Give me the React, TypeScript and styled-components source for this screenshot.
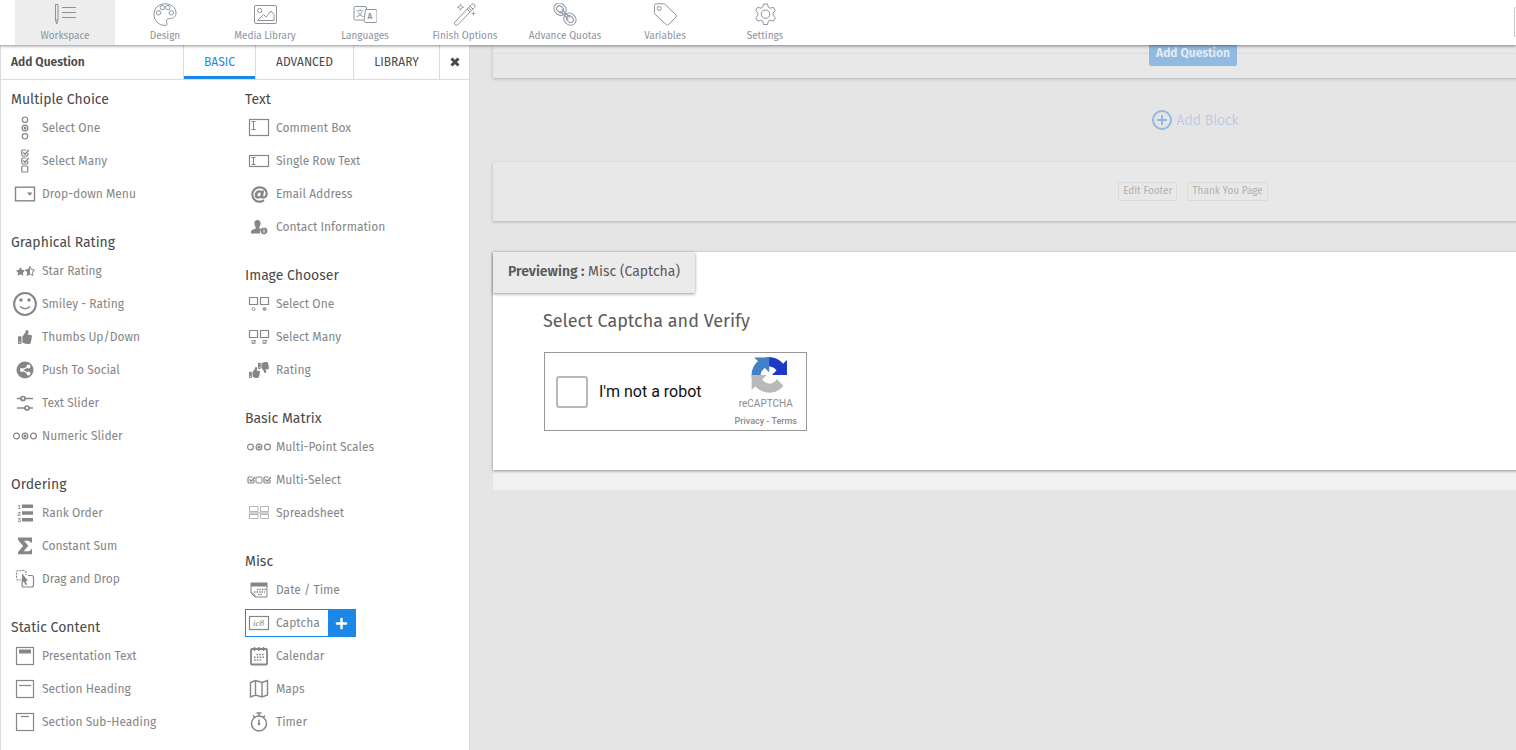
import React, { ReactNode, useState } from 'react';
import styled, { createGlobalStyle } from 'styled-components';
import { FaAt, FaStar, FaStarHalfAlt, FaThumbsDown, FaThumbsUp, FaPlus } from 'react-icons/fa';

const GlobalStyle = createGlobalStyle`
  * { box-sizing: border-box; }
  body {
    margin: 0;
    overflow: hidden;
    background: #e5e5e5;
    color: #4a4a4a;
    font-family: 'Fira Sans', 'Noto Sans', sans-serif;
  }
  button, input { font-family: inherit; }
`;

const Page = styled.div`
  display: flex;
  flex-direction: column;
  height: 100vh;
`;

const TopBar = styled.header`
  position: relative;
  z-index: 2;
  flex: none;
  display: flex;
  align-items: flex-start;
  height: 45px;
  padding-left: 15px;
  background: #fff;
  box-shadow: 0 1px 3px rgba(0, 0, 0, 0.45);
`;

const TopNav = styled.nav`
  display: flex;
  height: 100%;
  flex: 1;
`;

const TopButton = styled.button<{ $active?: boolean }>`
  display: flex;
  flex-direction: column;
  align-items: center;
  gap: 2px;
  width: 100px;
  padding: 3px 0 0;
  border: 0;
  background: ${(p) => (p.$active ? '#ededed' : 'transparent')};
  color: #8b93a1;
  font-size: 10px;
  line-height: 14px;
  white-space: nowrap;
`;

const SearchEdge = styled.div`
  width: 2px;
  height: 30px;
  margin-top: 7px;
  border: 1px solid #ccc;
  border-right: 0;
  border-radius: 2px 0 0 2px;
`;

const Body = styled.div`
  flex: 1;
  min-height: 0;
  display: flex;
`;

const Sidebar = styled.aside`
  flex: none;
  width: 470px;
  border: 1px solid #dcdcdc;
  border-width: 0 1px;
  background: #fff;
`;

const TabBar = styled.div`
  display: flex;
  height: 35px;
  border-bottom: 1px solid #dcdcdc;
`;

const SidebarTitle = styled.h2`
  flex: 1;
  margin: 0;
  padding-left: 10px;
  font-size: 12px;
  font-weight: 600;
  line-height: 34px;
`;

const Tab = styled.button<{ $active?: boolean; $width: number }>`
  display: flex;
  align-items: center;
  justify-content: center;
  width: ${(p) => p.$width}px;
  padding: 0;
  border: 0;
  border-left: 1px solid #dcdcdc;
  box-shadow: ${(p) => (p.$active ? 'inset 0 -3px #1b87e6' : 'none')};
  background: transparent;
  color: ${(p) => (p.$active ? '#1b87e6' : '#4a4a4a')};
  font-size: 12px;
  line-height: 20px;
`;

const Columns = styled.div`
  display: grid;
  grid-template-columns: 234px 1fr;
  padding: 9px 0 0 10px;
`;

const Column = styled.div`
  display: flex;
  flex-direction: column;
  gap: 24px;
`;

const Group = styled.section`
  display: flex;
  flex-direction: column;
  align-items: flex-start;
  gap: 5px;
`;

const GroupTitle = styled.h3`
  height: 20px;
  margin: 0;
  color: #4a4a4a;
  font-size: 14px;
  font-weight: 400;
  line-height: 22px;
`;

const Item = styled.button<{ $selected?: boolean }>`
  display: flex;
  align-items: center;
  height: 28px;
  padding: 0 ${(p) => (p.$selected ? 0 : 8)}px 0 0;
  border: 1px solid ${(p) => (p.$selected ? '#1b87e6' : 'transparent')};
  background: transparent;
  color: #868686;
  font-size: 12px;
  line-height: 16px;
  white-space: nowrap;
`;

const IconCell = styled.span`
  display: flex;
  justify-content: center;
  align-items: center;
  width: 26px;
  height: 26px;
  margin-right: 4px;
`;

const PlusCell = styled.span`
  display: flex;
  justify-content: center;
  align-items: center;
  width: 27px;
  height: 26px;
  margin-left: 8px;
  background: #1b87e6;
  color: #fff;
`;

const Canvas = styled.main`
  flex: 1;
  min-width: 0;
  overflow: hidden;
  padding-left: 23px;
`;

const Survey = styled.div`
  display: flex;
  flex-direction: column;
  min-width: 1400px;
`;

const Block = styled.section`
  display: flex;
  flex-direction: column;
  height: 33px;
  background: #e8e8e8;
  box-shadow: 0 1px 3px rgba(0, 0, 0, 0.22);
`;

const Divider = styled.div`
  display: flex;
  align-items: center;
  margin-top: -5px;
  &::before, &::after {
    content: '';
    flex: 1;
    height: 1px;
    background: #dcdcdc;
  }
`;

const AddQuestion = styled.button`
  width: 88px;
  height: 26px;
  padding: 0;
  border: 0;
  border-radius: 2px;
  background: #90bae0;
  color: #e8edf2;
  font-size: 12px;
  font-weight: 600;
`;

const AddBlock = styled.button`
  display: flex;
  align-items: center;
  justify-content: center;
  gap: 5px;
  width: 100%;
  height: 84px;
  padding: 0 0 0 4px;
  border: 0;
  background: transparent;
  color: #aec3e6;
  font-size: 14px;
  font-weight: 300;
`;

const FooterBlock = styled.section`
  display: flex;
  align-items: center;
  justify-content: center;
  gap: 10px;
  height: 59px;
  background: #e8e8e8;
  box-shadow: 0 1px 3px rgba(0, 0, 0, 0.22);
`;

const SmallButton = styled.button`
  height: 19px;
  padding: 0 4px;
  border: 1px solid #dbdbdb;
  border-radius: 1px;
  background: transparent;
  color: #b0b0b0;
  font-size: 10px;
  line-height: 17px;
`;

const PreviewArea = styled.div`
  margin-top: 31px;
  padding-bottom: 20px;
  background: #f1f1f1;
`;

const Preview = styled.section`
  height: 218px;
  background: #fff;
  box-shadow: 0 1px 3px rgba(0, 0, 0, 0.4);
`;

const PreviewTag = styled.div`
  width: fit-content;
  height: 41px;
  padding: 0 15px;
  background: #ebebeb;
  box-shadow: 0 1px 3px rgba(0, 0, 0, 0.4);
  color: #5a5a5a;
  font-size: 14px;
  line-height: 40px;
  b { font-weight: 600; }
`;

const PreviewTitle = styled.h1`
  margin: 15px 0 18px 50px;
  color: #5c5c5c;
  font-size: 18px;
  font-weight: 400;
  line-height: 26px;
`;

const Captcha = styled.div`
  display: flex;
  align-items: center;
  justify-content: space-between;
  width: 263px;
  height: 79px;
  margin-left: 51px;
  padding: 0 9px 0 11px;
  border: 1px solid #999;
  font-family: Roboto, sans-serif;
`;

const CaptchaLabel = styled.label`
  display: flex;
  align-items: center;
  gap: 11px;
  color: #111;
  font-size: 16px;
  line-height: 20px;
`;

const CheckInput = styled.input`
  appearance: none;
  width: 32px;
  height: 32px;
  margin: 0;
  border: 2px solid #b8b8b4;
  border-radius: 3px;
  background: #fff;
`;

const Brand = styled.div`
  display: flex;
  flex-direction: column;
  align-items: center;
  color: #8b8b8b;
  font-size: 10px;
  line-height: 22px;
`;

const Legal = styled.span`
  font-size: 9px;
  font-weight: 500;
  line-height: 12px;
`;

const Drawing = ({ children, w = 24, h = 24, sw = 1.2 }: { children: ReactNode; w?: number; h?: number; sw?: number }) => (
  <svg width={w} height={h} viewBox={`0 0 ${w} ${h}`} fill="none" stroke="currentColor" strokeWidth={sw} aria-hidden="true">
    {children}
  </svg>
);

const Solid = ({ children }: { children: ReactNode }) => <g fill="currentColor" stroke="none">{children}</g>;

const CheckedBox = ({ x, y, s = 6 }: { x: number; y: number; s?: number }) => (
  <>
    <path d={`M${x + s} ${y + s / 2}v${s / 2 - 1}q0 1-1 1H${x + 1}q-1 0-1-1V${y + 1}q0-1 1-1H${x + s - 1.5}`} />
    <path d={`M${x + s * 0.25} ${y + s * 0.4}l${s * 0.3} ${s * 0.3}L${x + s + 1} ${y}`} strokeWidth={1.4} />
  </>
);

const RadioRow = () => (
  <Drawing>
    <circle cx="3.5" cy="12" r="2.9" /><circle cx="12" cy="12" r="2.9" /><circle cx="20.5" cy="12" r="2.9" />
    <Solid><circle cx="12" cy="12" r="1.5" /></Solid>
  </Drawing>
);

const PageFrame = ({ children }: { children: ReactNode }) => (
  <Drawing>
    <rect x="3.5" y="3.5" width="17" height="17" />
    {children}
  </Drawing>
);

const icons: Record<string, ReactNode> = {
  radios: (
    <Drawing>
      <circle cx="12" cy="3.7" r="2.7" /><circle cx="12" cy="12" r="2.9" /><circle cx="12" cy="20.3" r="2.7" />
      <Solid><circle cx="12" cy="12" r="1.5" /></Solid>
    </Drawing>
  ),
  checks: (
    <Drawing>
      <CheckedBox x={8.8} y={1} /><CheckedBox x={8.8} y={9} />
      <rect x="8.8" y="17" width="6" height="6" rx="1" />
    </Drawing>
  ),
  dropdown: (
    <Drawing sw={1.4}>
      <rect x="2.5" y="5.2" width="19" height="13.6" />
      <Solid><path d="M14 10.500h5.500L16.750 13.800z" /></Solid>
    </Drawing>
  ),
  stars: <><FaStar size={9} /><FaStarHalfAlt size={10} /></>,
  smiley: (
    <Drawing sw={2}>
      <circle cx="12" cy="12" r="10.900" />
      <path d="M7 14.500q5 4.500 10 0" strokeWidth="1.600" />
      <Solid><circle cx="8" cy="8" r="1.700" /><circle cx="16" cy="8" r="1.700" /></Solid>
    </Drawing>
  ),
  thumb: <FaThumbsUp size={14} />,
  share: (
    <Drawing>
      <Solid><circle cx="12" cy="12" r="8.500" /></Solid>
      <g stroke="#fff" strokeWidth="1.300"><path d="M15.500 8.500L9 12l6.500 3.500" /></g>
      <g fill="#fff" stroke="none"><circle cx="15.500" cy="8.500" r="1.900" /><circle cx="8.800" cy="12" r="1.900" /><circle cx="15.500" cy="15.500" r="1.900" /></g>
    </Drawing>
  ),
  sliders: (
    <Drawing sw={1.7}>
      <path d="M4 7.500h4M12 7.500h8M4 17h8M16 17h4" /><circle cx="10" cy="7.500" r="2" /><circle cx="14" cy="17" r="2" />
    </Drawing>
  ),
  radioRow: <RadioRow />,
  rank: (
    <Drawing>
      <Solid>
        <path d="M9 3.500h11v3.500H9zM9 10.300h11v3.500H9zM9 17h11v3.500H9z" />
        <g fontSize="6" fontWeight="700" fontFamily="Liberation Sans"><text x="4.500" y="7.500">1</text><text x="4.500" y="14.500">2</text><text x="4.500" y="21">3</text></g>
      </Solid>
    </Drawing>
  ),
  sigma: (
    <Drawing><Solid><path d="M5 3.500h14v5h-1.500q-.5-1.700-2.500-1.700h-4l4.300 5-4.600 5.400h4.800q2 0 2.500-1.900H19v5H5v-2.300l5.200-6.100L5 6z" /></Solid></Drawing>
  ),
  drag: (
    <Drawing>
      <path d="M8.500 13H5.500q-2 0-2-2V5.500q0-2 2-2H11q2 0 2 2V8" strokeDasharray="2 1" />
      <path d="M15 8.500h3.500q2 0 2 2v7.500q0 2-2 2H11q-2 0-2-2v-3" />
      <Solid><path d="M9 6.500l6 7.200-2.400.2 1.500 3.500-1.700.7-1.500-3.500L9 16z" /></Solid>
    </Drawing>
  ),
  presentation: <PageFrame><Solid><path d="M6 5.500h12v4H6z" /></Solid></PageFrame>,
  heading: <PageFrame><path d="M6 8.500h12" /></PageFrame>,
  subheading: <PageFrame><path d="M8 6.500h8" /></PageFrame>,
  comment: (
    <Drawing><rect x="2.500" y="3.500" width="19" height="16" /><path d="M4.500 5.500h4M6.500 5.500v8M4.500 13.500h4" strokeWidth="1" /></Drawing>
  ),
  single: (
    <Drawing><rect x="2.500" y="6.500" width="19" height="11" /><path d="M4.500 8.500h4M6.500 8.500v7M4.500 15.500h4" strokeWidth="1" /></Drawing>
  ),
  at: <FaAt size={17} />,
  contact: (
    <Drawing>
      <Solid>
        <path d="M10.500 5c2.300 0 3.300 1.600 3.100 3.800-.2 1.700-.9 2.600-1.300 3.200v1.200l2.200.9a4 4 0 0 0-1.300 4.400H4c0-3 .5-3.300 2-3.900l2.700-1.200V12c-.5-.6-1.200-1.500-1.300-3.200C7.200 6.600 8.200 5 10.500 5z" />
        <circle cx="17" cy="15.800" r="3.400" />
      </Solid>
      <path d="M17 15.200v2.500M17 13.500v1" stroke="#fff" strokeWidth="1" />
    </Drawing>
  ),
  imageOne: (
    <Drawing>
      <path d="M2.500 5.500h8v7h-8zM13.500 5.500h8v7h-8z" />
      <circle cx="6.500" cy="17" r="1.500" strokeWidth=".8" /><circle cx="17.500" cy="17" r="1.500" strokeWidth="1" /><Solid><circle cx="17.500" cy="17" r=".8" /></Solid>
    </Drawing>
  ),
  imageMany: (
    <Drawing>
      <path d="M2.500 5.500h8v7h-8zM13.500 5.500h8v7h-8z" />
      <g strokeWidth=".8"><rect x="5" y="15.500" width="3" height="3" /><path d="M5.500 17l1 1 2.500-3" /><rect x="16" y="15.500" width="3" height="3" /><path d="M16.500 17l1 1 2.500-3" /></g>
    </Drawing>
  ),
  thumbs: (
    <Drawing w={20} h={18}>
      <Solid><FaThumbsUp x={0} y={6} size={11} /><FaThumbsDown x={9} y={1} size={11} /></Solid>
    </Drawing>
  ),
  checkRow: (
    <Drawing>
      <CheckedBox x={1} y={9} /><rect x="9" y="9" width="6" height="6" rx="1" strokeWidth="1" /><CheckedBox x={17} y={9} />
    </Drawing>
  ),
  sheet: (
    <Drawing sw={1}>
      <g opacity=".6"><path d="M2.500 5.500h8.500v5H2.500zM13.500 5.500h8v5h-8zM2.500 13.500h8.500v4H2.500zM13.500 13.500h8v4h-8z" /></g><path d="M2 12h20" strokeWidth=".8" />
    </Drawing>
  ),
  date: (
    <Drawing sw={1}>
      <Solid><path d="M3.500 4.500h17v4h-17z" /></Solid>
      <path d="M4 8v7l4 4h12V8M4 15q3.500-.5 4 4" />
      <path d="M10 11.500h9M7 14h11M11 16.500h5" strokeWidth="1.500" strokeDasharray="1.500 1" />
    </Drawing>
  ),
  captcha: (
    <Drawing>
      <rect x="2.500" y="5.500" width="19" height="13" />
      <text x="6" y="15" fill="currentColor" stroke="none" fontSize="9" fontStyle="italic" fontFamily="Liberation Serif">ic8</text>
    </Drawing>
  ),
  calendar: (
    <Drawing sw={1.8}>
      <rect x="4" y="5" width="16" height="15.500" rx="1" />
      <path d="M7.500 3v4M12 3v4M16.500 3v4" strokeWidth="1.500" />
      <path d="M9.500 10.500h8M7 13.200h11M7 16h8" strokeWidth="1.600" strokeDasharray="1.600 1.200" />
    </Drawing>
  ),
  map: (
    <Drawing sw={1.4}>
      <path d="M3.500 5.500l5-2 6.500 2 5.500-2v14.500l-5.500 2-6.500-2-5 2zM8.500 3.500V18M15 5.500V20" />
    </Drawing>
  ),
  timer: (
    <Drawing sw={1.5}>
      <circle cx="12" cy="13.500" r="7.500" /><path d="M12 6V3M9.500 3h5M6 5.500L7.500 7M18 5.500L16.500 7" /><path d="M12 9.500v4.500" />
      <Solid><circle cx="12" cy="14" r="1.300" /></Solid>
    </Drawing>
  ),
};

const topItems: [string, ReactNode][] = [
  ['Workspace', (
    <>
      <path d="M2.500 1.500h2.500v15.500L3.700 21l-1.200-4zM2.500 17h2.500" /><path d="M9 4.500h14M9 9.500h14M9 14.500h14" />
    </>
  )],
  ['Design', (
    <>
      <path d="M13 22.500c-8 0-12-5-12-11.300C1 5 6 .8 12 .8S23 4.500 23 10c0 4-3 5.500-5.500 5.500-3 0-4.500 1.500-4 3.500.3 1.200.7 2 .2 3z" />
      <circle cx="9.300" cy="4.600" r="2.200" /><circle cx="14.800" cy="4.600" r="2.200" /><circle cx="5.500" cy="9.800" r="2.200" /><circle cx="18.300" cy="9.800" r="2.200" />
    </>
  )],
  ['Media Library', (
    <>
      <rect x="1.500" y="2.500" width="22" height="18" rx="1.500" /><circle cx="6.700" cy="7.500" r="2.100" />
      <path d="M4.500 17.500l6-6 2.500 2.500 5-6 3 3.500v6z" />
    </>
  )],
  ['Languages', (
    <>
      <path d="M10.500 17H2.500q-1.500 0-1.500-1.500v-11Q1 3.500 2.500 3.500h9.500q1.500 0 1.500 1.500V6" />
      <path d="M12.500 6.500h9.500q2 0 2 2v9q0 2-2 2H13q-2 0-2-2z" />
      <g fill="currentColor" stroke="none"><text x="3" y="12.500" fontSize="8" fontFamily="Noto Sans CJK SC">文</text><text x="14.500" y="16" fontSize="8" fontWeight="600">A</text></g>
    </>
  )],
  ['Finish Options', (
    <>
      <path d="M1.500 19.500L18.500 1.500q1.500-1.300 3 0t0 3L4.500 22q-1.500.8-2.500-.3t-.5-2.200zM14 6l3 3M17 3.500l3 2.500M15.500 5l3 2.500" />
      <path d="M7.500 1l.9 2.300 2.300.9-2.300.9-.9 2.300-.9-2.300-2.300-.9 2.300-.9zM20.500 8.500v4M18.500 10.500h4" strokeWidth=".8" />
    </>
  )],
  ['Advance Quotas', (
    <g transform="translate(0 -.8) rotate(45 12 12)">
      <rect x="-1.500" y="6.500" width="13" height="11" rx="5.500" /><rect x="1.300" y="9.200" width="7.500" height="5.600" rx="2.800" />
      <rect x="12.500" y="6.500" width="13" height="11" rx="5.500" /><rect x="15.200" y="9.200" width="7.500" height="5.600" rx="2.800" /><path d="M6 10.800h12M6 13.200h12" />
    </g>
  )],
  ['Variables', (
    <>
      <path d="M1.500 2.500q0-1.700 2-1.700h7q1 0 1.700.7l10.800 10.500q1 1 0 2l-7.500 7.800q-1 1-2 0l-11.300-10.500q-.7-.7-.7-1.700z" /><circle cx="6.300" cy="5.500" r="2" />
    </>
  )],
  ['Settings', (
    <>
      <path d="M10.500 1h4l.8 3.100 1.900 1.100 3.100-.9 2 3.400-2.300 2.300v2.300l2.300 2.300-2 3.500-3.100-.9-1.900 1.100-.8 3.200h-4l-.8-3.200-1.900-1.100-3.100.9-2-3.500 2.300-2.300v-2.300L2.700 7.700l2-3.400 3.100.9 1.900-1.100z" strokeLinejoin="round" />
      <circle cx="12.500" cy="11.200" r="4.200" />
    </>
  )],
];

type GroupData = { title: string; items: [string, string][] };

const leftGroups: GroupData[] = [
  { title: 'Multiple Choice', items: [['Select One', 'radios'], ['Select Many', 'checks'], ['Drop-down Menu', 'dropdown']] },
  {
    title: 'Graphical Rating',
    items: [['Star Rating', 'stars'], ['Smiley - Rating', 'smiley'], ['Thumbs Up/Down', 'thumb'], ['Push To Social', 'share'], ['Text Slider', 'sliders'], ['Numeric Slider', 'radioRow']],
  },
  { title: 'Ordering', items: [['Rank Order', 'rank'], ['Constant Sum', 'sigma'], ['Drag and Drop', 'drag']] },
  { title: 'Static Content', items: [['Presentation Text', 'presentation'], ['Section Heading', 'heading'], ['Section Sub-Heading', 'subheading']] },
];

const rightGroups: GroupData[] = [
  { title: 'Text', items: [['Comment Box', 'comment'], ['Single Row Text', 'single'], ['Email Address', 'at'], ['Contact Information', 'contact']] },
  { title: 'Image Chooser', items: [['Select One', 'imageOne'], ['Select Many', 'imageMany'], ['Rating', 'thumbs']] },
  { title: 'Basic Matrix', items: [['Multi-Point Scales', 'radioRow'], ['Multi-Select', 'checkRow'], ['Spreadsheet', 'sheet']] },
  { title: 'Misc', items: [['Date / Time', 'date'], ['Captcha', 'captcha'], ['Calendar', 'calendar'], ['Maps', 'map'], ['Timer', 'timer']] },
];

const QuestionColumn = ({ groups }: { groups: GroupData[] }) => (
  <Column>
    {groups.map((group) => (
      <Group key={group.title}>
        <GroupTitle>{group.title}</GroupTitle>
        {group.items.map(([label, icon]) => (
          <Item key={label} $selected={label === 'Captcha'}>
            <IconCell>{icons[icon]}</IconCell>
            {label}
            {label === 'Captcha' && <PlusCell><FaPlus size={13} /></PlusCell>}
          </Item>
        ))}
      </Group>
    ))}
  </Column>
);

const CaptchaLogo = () => (
  <svg width="42" height="36" viewBox="-12 0 76 64" aria-hidden="true">
    <path fill="#1c3ac4" d="M64 31.955l-.033-1.370V4.687l-7.160 7.160C50.948 4.674 42.033.093 32.050.093c-10.400 0-19.622 4.960-25.458 12.640l11.736 11.860a15.550 15.550 0 0 1 4.754-5.334c2.050-1.600 4.952-2.906 8.968-2.906.485 0 .860.057 1.135.163 4.976.393 9.288 3.140 11.828 7.124l-8.307 8.307L64 31.953" />
    <path fill="#3f82c8" d="M31.862.094l-1.370.033H4.594l7.160 7.160C4.580 13.147 0 22.060 0 32.046c0 10.400 4.960 19.622 12.640 25.458L24.500 45.768a15.550 15.550 0 0 1-5.334-4.754c-1.600-2.050-2.906-4.952-2.906-8.968 0-.485.057-.860.163-1.135.393-4.976 3.140-9.288 7.124-11.828l8.307 8.307L31.860.095" />
    <path fill="#b9b9b9" d="M.001 32.045l.033 1.370v25.898l7.160-7.160c5.860 7.173 14.774 11.754 24.760 11.754 10.400 0 19.622-4.960 25.458-12.640l-11.736-11.860a15.550 15.550 0 0 1-4.754 5.334c-2.050 1.600-4.952 2.906-8.968 2.906-.485 0-.860-.057-1.135-.163-4.976-.393-9.288-3.140-11.828-7.124l8.307-8.307c-10.522.040-22.400.066-27.295-.005" />
  </svg>
);

export default function App() {
  const [checked, setChecked] = useState(false);
  return (
    <Page>
      <GlobalStyle />
      <TopBar>
        <TopNav>
          {topItems.map(([label, art], i) => (
            <TopButton key={label} $active={i === 0}>
              <Drawing sw={1}>{art}</Drawing>
              {label}
            </TopButton>
          ))}
        </TopNav>
        <SearchEdge />
      </TopBar>
      <Body>
        <Sidebar>
          <TabBar>
            <SidebarTitle>Add Question</SidebarTitle>
            <Tab $width={72} $active>BASIC</Tab>
            <Tab $width={98}>ADVANCED</Tab>
            <Tab $width={86}>LIBRARY</Tab>
            <Tab $width={30} aria-label="Close">
              <Drawing w={10} h={10} sw={3}><path d="M1.500 1.500l7 7M8.500 1.500l-7 7" /></Drawing>
            </Tab>
          </TabBar>
          <Columns>
            <QuestionColumn groups={leftGroups} />
            <QuestionColumn groups={rightGroups} />
          </Columns>
        </Sidebar>
        <Canvas>
          <Survey>
            <Block>
              <Divider><AddQuestion>Add Question</AddQuestion></Divider>
            </Block>
            <AddBlock>
              <svg width="20" height="20" viewBox="0 0 20 20" fill="none" stroke="#90bae0" strokeWidth="2" aria-hidden="true">
                <circle cx="10" cy="10" r="9" /><path d="M10 5v10M5 10h10" />
              </svg>
              Add Block
            </AddBlock>
            <FooterBlock>
              <SmallButton>Edit Footer</SmallButton>
              <SmallButton>Thank You Page</SmallButton>
            </FooterBlock>
            <PreviewArea>
              <Preview>
                <PreviewTag><b>Previewing :</b> Misc (Captcha)</PreviewTag>
                <PreviewTitle>Select Captcha and Verify</PreviewTitle>
                <Captcha>
                  <CaptchaLabel>
                    <CheckInput type="checkbox" checked={checked} onChange={() => setChecked(!checked)} />
                    I'm not a robot
                  </CaptchaLabel>
                  <Brand>
                    <CaptchaLogo />
                    reCAPTCHA
                    <Legal>Privacy - Terms</Legal>
                  </Brand>
                </Captcha>
              </Preview>
            </PreviewArea>
          </Survey>
        </Canvas>
      </Body>
    </Page>
  );
}
